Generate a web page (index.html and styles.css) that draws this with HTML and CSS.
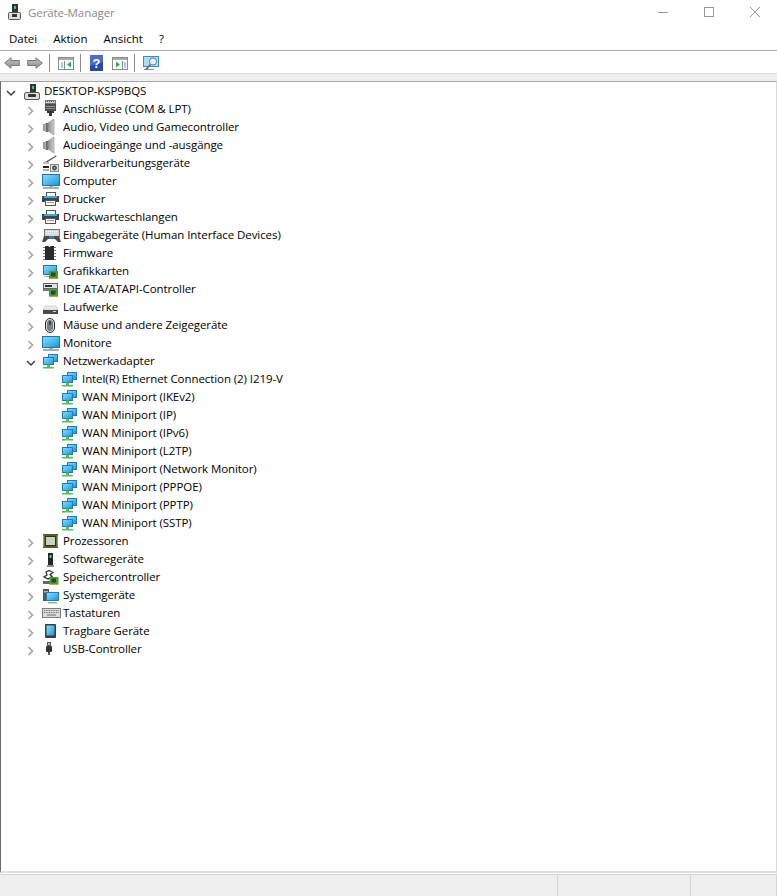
FILE: index.html
```html
<!DOCTYPE html>
<html lang="de">
<head>
<meta charset="utf-8">
<title>Geräte-Manager</title>
<link rel="stylesheet" href="styles.css">
</head>
<body>
<svg class="defs" width="0" height="0" aria-hidden="true">
  <defs>
    <linearGradient id="g-screen" x1="0" y1="0" x2="1" y2="1"><stop offset="0" stop-color="#8fdcfa"/><stop offset=".55" stop-color="#4db8ea"/><stop offset="1" stop-color="#1f8fd0"/></linearGradient>
    <linearGradient id="g-cone" x1="0" y1="0" x2="1" y2="0"><stop offset="0" stop-color="#8d8d8d"/><stop offset="1" stop-color="#cfcfcf"/></linearGradient>
    <linearGradient id="g-arrow" x1="0" y1="0" x2="0" y2="1"><stop offset="0" stop-color="#c4c4c4"/><stop offset="1" stop-color="#8f8f8f"/></linearGradient>
    <symbol id="i-title" viewBox="0 0 14 18">
      <rect x="4" y="1" width="6" height="9" fill="#333"/><rect x="6" y="3" width="2" height="3" fill="#3fd05a"/>
      <rect x=".5" y="9.500" width="12" height="7" rx="1" fill="#dedede" stroke="#555"/><rect x="4" y="11" width="5" height="3" fill="#333"/>
    </symbol>
    <symbol id="i-pc" viewBox="0 0 20 18">
      <rect x="7" y="2" width="6" height="9" fill="#333"/><rect x="9" y="4" width="2" height="3" fill="#3fd05a"/>
      <rect x="1.500" y="10.500" width="15" height="7" rx="1.500" fill="#dedede" stroke="#5a5a5a"/><rect x="5" y="12" width="8" height="3" rx="1" fill="#333"/>
    </symbol>
    <symbol id="i-port" viewBox="0 0 20 18">
      <rect x="3.500" y=".5" width="10" height="3" fill="#d4d4d4" stroke="#777"/><path d="M5 1.500h1M7 1.500h1M9 1.500h1M11 1.500h1" stroke="#555"/>
      <rect x="3" y="4" width="11" height="7" fill="#4f4f4f"/><rect x="4" y="6" width="9" height="1" fill="#9a9a9a"/><rect x="4" y="8" width="9" height="1" fill="#8a8a8a"/>
      <path d="M5 11h7v2h-2v3H7v-3H5z" fill="#333"/>
    </symbol>
    <symbol id="i-audio" viewBox="0 0 20 18">
      <rect x="1" y="6" width="2" height="7" fill="#9a9a9a"/><rect x="3.500" y="5" width="2.500" height="9" fill="#6d6d6d"/>
      <path d="M6 5l6-4v16l-6-4z" fill="url(#g-cone)" stroke="#8c8c8c" stroke-width=".6"/>
    </symbol>
    <symbol id="i-cam" viewBox="0 0 20 18">
      <path d="M3 8L14 1.500l.6 1L4 9z" fill="#555"/><rect x="1" y="8" width="6" height="2" fill="#bbb"/>
      <rect x="1" y="12" width="6" height="2" fill="#222"/><rect x="1" y="15" width="6" height="2" fill="#aaa"/>
      <rect x="8.500" y="10.500" width="8" height="7" fill="#e2e2e2" stroke="#888"/><circle cx="12.500" cy="14" r="2.400" fill="#444"/><circle cx="12.500" cy="14" r="1" fill="#7fb7d8"/>
    </symbol>
    <symbol id="i-monitor" viewBox="0 0 20 18">
      <rect x=".5" y="2.500" width="17" height="11" fill="url(#g-screen)" stroke="#2276ae"/>
      <rect x="7" y="14" width="4" height="1" fill="#aaa"/><rect x="1" y="15" width="16" height="2" fill="#a5adb6"/>
    </symbol>
    <symbol id="i-printer" viewBox="0 0 20 18">
      <rect x="4.500" y="2.500" width="9" height="4" fill="#fff" stroke="#555"/>
      <rect x="0" y="6" width="17" height="6" fill="#444"/><rect x="2" y="6" width="13" height="2" fill="#2fb0e8"/>
      <rect x="3.500" y="10.500" width="10" height="5" fill="#fff" stroke="#555"/><path d="M5 12.500h7" stroke="#9a9a9a"/>
    </symbol>
    <symbol id="i-input" viewBox="0 0 20 18">
      <rect x="2.500" y="3.500" width="15" height="7" fill="#d6d6d6" stroke="#777"/>
      <path d="M4 5.500h12M4 7.500h12" stroke="#fff" stroke-dasharray="1 1"/>
      <path d="M0 16l2-6h5l1 2h3l1-2h5l2 6h-3l-3-3H6l-3 3z" fill="#4a4a4a"/><rect x="7" y="10" width="5" height="3" fill="#2a7fc0"/>
    </symbol>
    <symbol id="i-chip" viewBox="0 0 20 18">
      <path d="M1 3h2v1H1zM1 6h2v1H1zM1 9h2v1H1zM1 12h2v1H1zM1 15h2v1H1zM12 3h2v1h-2zM12 6h2v1h-2zM12 9h2v1h-2zM12 12h2v1h-2zM12 15h2v1h-2z" fill="#777"/>
      <path d="M3 2h3.500a1 1 0 0 0 2 0H12v14H3z" fill="#2b2b2b"/>
    </symbol>
    <symbol id="i-card" viewBox="0 0 9 8">
      <rect width="9" height="7" fill="#4f9a45"/><rect x="2" y="1.500" width="4.500" height="4" fill="#22501c"/><path d="M0 7h9v1H0z" fill="#c9a227"/>
    </symbol>
    <symbol id="i-gpu" viewBox="0 0 20 18">
      <rect x="1.500" y="3.500" width="13" height="9" fill="url(#g-screen)" stroke="#2276ae"/><rect x="2" y="14" width="6" height="1" fill="#a5adb6"/>
      <use href="#i-card" x="7" y="9" width="9" height="8"/>
    </symbol>
    <symbol id="i-ide" viewBox="0 0 20 18">
      <rect x="1.500" y="3.500" width="14" height="5" fill="#e2e2e2" stroke="#666"/><rect x="3" y="5" width="7" height="2" fill="#333"/>
      <rect x="1" y="9" width="6" height="2" fill="#777"/>
      <use href="#i-card" x="7" y="9" width="9" height="8"/>
    </symbol>
    <symbol id="i-drive" viewBox="0 0 20 18">
      <path d="M3 8h11l2 4H1z" fill="#eaeaea" stroke="#bbb" stroke-width=".6"/>
      <rect x="1" y="12" width="15" height="4" fill="#4a4a4a"/><rect x="11" y="13" width="3" height="1" fill="#ccc"/>
    </symbol>
    <symbol id="i-mouse" viewBox="0 0 20 18">
      <rect x="3.500" y="2.500" width="9" height="14" rx="4.500" fill="#dcdcdc" stroke="#2c2c2c"/>
      <rect x="5" y="4" width="6" height="11" rx="3" fill="#75818d"/>
      <rect x="7.300" y="5" width="1.400" height="4" rx=".7" fill="#2c2c2c"/>
    </symbol>
    <symbol id="i-net" viewBox="0 0 20 18">
      <rect x="6.500" y="2.500" width="9" height="7" fill="url(#g-screen)" stroke="#1f7cb8"/>
      <rect x="1.500" y="5.500" width="10" height="7" fill="url(#g-screen)" stroke="#1f7cb8"/>
      <path d="M5 12.500h3V15h4v1.500H1V15h4z" fill="#4fc05a"/>
    </symbol>
    <symbol id="i-cpu" viewBox="0 0 20 18">
      <rect x="1" y="2" width="15" height="14" fill="#9aa83a"/><path d="M1 2h15v1.500H1zM1 14.500h15V16H1z" fill="#4f6420"/>
      <rect x="2.500" y="3.500" width="12" height="11" fill="#2e2e2e"/><rect x="4" y="5" width="9" height="8" fill="#c6d4c0"/>
    </symbol>
    <symbol id="i-soft" viewBox="0 0 20 18">
      <path d="M6 3h5v12H6z" fill="#262626"/><rect x="7.500" y="5" width="2" height="3" fill="#3fe060"/><rect x="5" y="15" width="7" height="2" fill="#8e8e8e"/>
    </symbol>
    <symbol id="i-store" viewBox="0 0 20 18">
      <path d="M4 4l3-1.500 4 2-3 2 2 2-4 2.500-4-2 3-2z" fill="#fff" stroke="#333" stroke-width="1.300"/>
      <rect x="1" y="13" width="8" height="3" fill="#666"/>
      <use href="#i-card" x="7" y="9" width="10" height="8"/>
    </symbol>
    <symbol id="i-sys" viewBox="0 0 20 18">
      <rect x="1" y="3" width="6" height="12" fill="#555"/><rect x="2" y="5" width="4" height="1.500" fill="#b5b5b5"/>
      <rect x="4.500" y="6.500" width="12" height="8" fill="url(#g-screen)" stroke="#1f7cb8"/><rect x="6" y="16" width="9" height="1.500" fill="#9fa6ae"/>
    </symbol>
    <symbol id="i-kbd" viewBox="0 0 20 18">
      <rect x=".5" y="4.500" width="18" height="9" fill="#dcdcdc" stroke="#7c7c7c"/>
      <path d="M2 6.500h15M2 8.500h15" stroke="#6d6d6d" stroke-dasharray="1 .7"/><path d="M5 11h9" stroke="#6d6d6d"/>
    </symbol>
    <symbol id="i-phone" viewBox="0 0 20 18">
      <rect x="3" y="2" width="11" height="14" rx="1" fill="#3c3c3c"/><rect x="4.500" y="3.500" width="8" height="10" fill="url(#g-screen)"/>
    </symbol>
    <symbol id="i-usb" viewBox="0 0 20 18">
      <rect x="5.500" y="2.500" width="3" height="3" fill="#bbb" stroke="#555"/>
      <rect x="4" y="6" width="6" height="6" rx="1" fill="#333"/>
      <rect x="6" y="12" width="2" height="3" fill="#555"/>
    </symbol>
  </defs>
</svg>

<div class="window">
  <header class="titlebar">
    <svg class="app-icon"><use href="#i-title"/></svg>
    <span class="title">Geräte-Manager</span>
    <div class="controls">
      <svg class="ctl" viewBox="0 0 46 30"><path d="M19 12.500h10" stroke="#999" fill="none"/></svg>
      <svg class="ctl" viewBox="0 0 46 30"><rect x="19.500" y="7.500" width="9" height="9" stroke="#999" fill="none"/></svg>
      <svg class="ctl" viewBox="0 0 46 30"><path d="M19 7l10 10M29 7L19 17" stroke="#999" fill="none"/></svg>
    </div>
  </header>
  <nav class="menubar">
    <span>Datei</span><span>Aktion</span><span>Ansicht</span><span>?</span>
  </nav>
  <div class="toolbar">
    <svg class="tool arrow" viewBox="0 0 16 12"><path d="M.7 6L7 .8V3.500h8.300v5H7v2.700z" fill="url(#g-arrow)" stroke="#777"/></svg>
    <svg class="tool arrow" viewBox="0 0 16 12"><path d="M15.300 6L9 .8V3.500H.7v5H9v2.700z" fill="url(#g-arrow)" stroke="#777"/></svg>
    <i class="sep"></i>
    <svg class="tool panel" viewBox="0 0 16 13"><rect x=".5" y=".5" width="15" height="12" fill="#fff" stroke="#8a8a8a"/><rect x="1" y="1" width="14" height="2" fill="#a9a9a9"/><path d="M6.500 4v8M3 6h2M3 8h2M3 10h2" stroke="#6b92b8"/><path d="M13 4.500v6l-4-3z" fill="#2fae47"/></svg>
    <i class="sep"></i>
    <svg class="tool help" viewBox="0 0 13 16"><rect width="13" height="16" fill="#2a47a8"/><path d="M0 0h13v7L0 11z" fill="#4d6cc8"/><text x="6.500" y="13" text-anchor="middle" class="qmark">?</text></svg>
    <svg class="tool panel" viewBox="0 0 16 13"><rect x=".5" y=".5" width="15" height="12" fill="#fff" stroke="#8a8a8a"/><rect x="1" y="1" width="14" height="2" fill="#a9a9a9"/><path d="M10.500 4v8M12 6h2M12 8h2M12 10h2" stroke="#6b92b8"/><path d="M4 4.500v6l4-3z" fill="#2fae47"/></svg>
    <i class="sep"></i>
    <svg class="tool scan" viewBox="0 0 16 15"><rect x=".5" y=".5" width="15" height="10" fill="#a9e0f7" stroke="#2b93cf"/><path d="M1 13.500h10" stroke="#8a8a8a"/><circle cx="10" cy="5.500" r="3.600" fill="#e4f3f9" stroke="#777"/><path d="M7.500 8.500L3 13.500" stroke="#666" stroke-width="1.600"/></svg>
  </div>
  <div class="band"></div>
  <main class="tree">
    <ul class="list">
      <li class="row root"><svg class="chev" viewBox="0 0 10 10"><path d="M1 3l4 4 4-4"/></svg><svg class="ico"><use href="#i-pc"/></svg><span>DESKTOP-KSP9BQS</span></li>
      <li class="row l1"><svg class="chev closed" viewBox="0 0 10 10"><path d="M2.500 1l4 4-4 4"/></svg><svg class="ico"><use href="#i-port"/></svg><span>Anschlüsse (COM &amp; LPT)</span></li>
      <li class="row l1"><svg class="chev closed" viewBox="0 0 10 10"><path d="M2.500 1l4 4-4 4"/></svg><svg class="ico"><use href="#i-audio"/></svg><span>Audio, Video und Gamecontroller</span></li>
      <li class="row l1"><svg class="chev closed" viewBox="0 0 10 10"><path d="M2.500 1l4 4-4 4"/></svg><svg class="ico"><use href="#i-audio"/></svg><span>Audioeingänge und -ausgänge</span></li>
      <li class="row l1"><svg class="chev closed" viewBox="0 0 10 10"><path d="M2.500 1l4 4-4 4"/></svg><svg class="ico"><use href="#i-cam"/></svg><span>Bildverarbeitungsgeräte</span></li>
      <li class="row l1"><svg class="chev closed" viewBox="0 0 10 10"><path d="M2.500 1l4 4-4 4"/></svg><svg class="ico"><use href="#i-monitor"/></svg><span>Computer</span></li>
      <li class="row l1"><svg class="chev closed" viewBox="0 0 10 10"><path d="M2.500 1l4 4-4 4"/></svg><svg class="ico"><use href="#i-printer"/></svg><span>Drucker</span></li>
      <li class="row l1"><svg class="chev closed" viewBox="0 0 10 10"><path d="M2.500 1l4 4-4 4"/></svg><svg class="ico"><use href="#i-printer"/></svg><span>Druckwarteschlangen</span></li>
      <li class="row l1"><svg class="chev closed" viewBox="0 0 10 10"><path d="M2.500 1l4 4-4 4"/></svg><svg class="ico"><use href="#i-input"/></svg><span>Eingabegeräte (Human Interface Devices)</span></li>
      <li class="row l1"><svg class="chev closed" viewBox="0 0 10 10"><path d="M2.500 1l4 4-4 4"/></svg><svg class="ico"><use href="#i-chip"/></svg><span>Firmware</span></li>
      <li class="row l1"><svg class="chev closed" viewBox="0 0 10 10"><path d="M2.500 1l4 4-4 4"/></svg><svg class="ico"><use href="#i-gpu"/></svg><span>Grafikkarten</span></li>
      <li class="row l1"><svg class="chev closed" viewBox="0 0 10 10"><path d="M2.500 1l4 4-4 4"/></svg><svg class="ico"><use href="#i-ide"/></svg><span>IDE ATA/ATAPI-Controller</span></li>
      <li class="row l1"><svg class="chev closed" viewBox="0 0 10 10"><path d="M2.500 1l4 4-4 4"/></svg><svg class="ico"><use href="#i-drive"/></svg><span>Laufwerke</span></li>
      <li class="row l1"><svg class="chev closed" viewBox="0 0 10 10"><path d="M2.500 1l4 4-4 4"/></svg><svg class="ico"><use href="#i-mouse"/></svg><span>Mäuse und andere Zeigegeräte</span></li>
      <li class="row l1"><svg class="chev closed" viewBox="0 0 10 10"><path d="M2.500 1l4 4-4 4"/></svg><svg class="ico"><use href="#i-monitor"/></svg><span>Monitore</span></li>
      <li class="row l1"><svg class="chev" viewBox="0 0 10 10"><path d="M1 3l4 4 4-4"/></svg><svg class="ico"><use href="#i-net"/></svg><span>Netzwerkadapter</span></li>
      <li class="row l2"><svg class="ico"><use href="#i-net"/></svg><span>Intel(R) Ethernet Connection (2) I219-V</span></li>
      <li class="row l2"><svg class="ico"><use href="#i-net"/></svg><span>WAN Miniport (IKEv2)</span></li>
      <li class="row l2"><svg class="ico"><use href="#i-net"/></svg><span>WAN Miniport (IP)</span></li>
      <li class="row l2"><svg class="ico"><use href="#i-net"/></svg><span>WAN Miniport (IPv6)</span></li>
      <li class="row l2"><svg class="ico"><use href="#i-net"/></svg><span>WAN Miniport (L2TP)</span></li>
      <li class="row l2"><svg class="ico"><use href="#i-net"/></svg><span>WAN Miniport (Network Monitor)</span></li>
      <li class="row l2"><svg class="ico"><use href="#i-net"/></svg><span>WAN Miniport (PPPOE)</span></li>
      <li class="row l2"><svg class="ico"><use href="#i-net"/></svg><span>WAN Miniport (PPTP)</span></li>
      <li class="row l2"><svg class="ico"><use href="#i-net"/></svg><span>WAN Miniport (SSTP)</span></li>
      <li class="row l1"><svg class="chev closed" viewBox="0 0 10 10"><path d="M2.500 1l4 4-4 4"/></svg><svg class="ico"><use href="#i-cpu"/></svg><span>Prozessoren</span></li>
      <li class="row l1"><svg class="chev closed" viewBox="0 0 10 10"><path d="M2.500 1l4 4-4 4"/></svg><svg class="ico"><use href="#i-soft"/></svg><span>Softwaregeräte</span></li>
      <li class="row l1"><svg class="chev closed" viewBox="0 0 10 10"><path d="M2.500 1l4 4-4 4"/></svg><svg class="ico"><use href="#i-store"/></svg><span>Speichercontroller</span></li>
      <li class="row l1"><svg class="chev closed" viewBox="0 0 10 10"><path d="M2.500 1l4 4-4 4"/></svg><svg class="ico"><use href="#i-sys"/></svg><span>Systemgeräte</span></li>
      <li class="row l1"><svg class="chev closed" viewBox="0 0 10 10"><path d="M2.500 1l4 4-4 4"/></svg><svg class="ico"><use href="#i-kbd"/></svg><span>Tastaturen</span></li>
      <li class="row l1"><svg class="chev closed" viewBox="0 0 10 10"><path d="M2.500 1l4 4-4 4"/></svg><svg class="ico"><use href="#i-phone"/></svg><span>Tragbare Geräte</span></li>
      <li class="row l1"><svg class="chev closed" viewBox="0 0 10 10"><path d="M2.500 1l4 4-4 4"/></svg><svg class="ico"><use href="#i-usb"/></svg><span>USB-Controller</span></li>
    </ul>
  </main>
  <footer class="status">
    <div class="cell grow"></div>
    <div class="cell mid"></div>
    <div class="cell end"></div>
  </footer>
</div>
</body>
</html>
```

FILE: styles.css
```css
* { box-sizing: border-box; }
html, body { margin: 0; height: 100%; background: #fff; }
body { font-family: "Open Sans", "Noto Sans", sans-serif; font-size: 11.5px; letter-spacing: -0.08px; color: #000; overflow: hidden; }
.defs { position: absolute; }
.window { height: 896px; display: flex; flex-direction: column; }

.titlebar { height: 28px; display: flex; align-items: center; padding-left: 8px; flex: none; }
.app-icon { width: 14px; height: 18px; margin-right: 6px; margin-top: -4px; }
.title { color: #8a8a8a; margin-top: -4px; }
.controls { margin-left: auto; display: flex; align-self: flex-start; }
.ctl { width: 46px; height: 30px; }

.menubar { height: 23px; display: flex; align-items: center; gap: 16px; padding: 0 0 2px 9px; border-bottom: 1px solid #aaa; letter-spacing: 0; flex: none; }

.toolbar { height: 23px; display: flex; align-items: center; padding: 2px 0 0 4px; border-bottom: 1px solid #d9d9d9; flex: none; }
.tool { display: block; flex: none; }
.arrow { width: 16px; height: 12px; margin-right: 7px; }
.arrow + .sep { margin-left: -1px; }
.sep { width: 1px; height: 18px; background: #8a8a8a; margin: 0 8px 0 0; flex: none; }
.panel { width: 16px; height: 13px; margin-right: 6px; }
.help { width: 13px; height: 16px; margin: 0 9px 0 1px; }
.scan { width: 16px; height: 15px; }
.qmark { font: bold 13px "Liberation Sans", sans-serif; fill: #fff; }

.band { height: 7px; background: #efefef; flex: none; }

.tree { flex: 1; border: 1px solid #d9d9d9; border-left: 1px solid #6a6a6a; border-top: 1px solid #a5a5a5; min-height: 0; border-bottom: 2px solid #e0e0e0; }
.list { list-style: none; margin: 0; padding: 0; }
.row { height: 18px; display: flex; align-items: center; white-space: nowrap; }
.row span { margin: 0 0 2px 1px; }
.root { padding-left: 5px; }
.l1 { padding-left: 25px; }
.l2 { padding-left: 60px; }
.chev { width: 10px; height: 10px; margin-top: 3px; fill: none; stroke: #404040; stroke-width: 1.5; flex: none; }
.chev.closed { stroke: #a6a6a6; stroke-width: 1.7; }
.ico { width: 20px; height: 18px; flex: none; }
.l1 .ico { margin-left: 6px; }
.root .ico { margin-left: 7px; }

.status { height: 22px; background: #efefef; border-top: 1px solid #d6d6d6; margin-top: 1px; display: flex; flex: none; }
.cell { height: 100%; }
.grow { flex: 1; }
.mid { width: 133px; border-left: 1px solid #d6d6d6; }
.end { width: 87px; border-left: 1px solid #d6d6d6; border-right: 1px solid #d6d6d6; }
```
